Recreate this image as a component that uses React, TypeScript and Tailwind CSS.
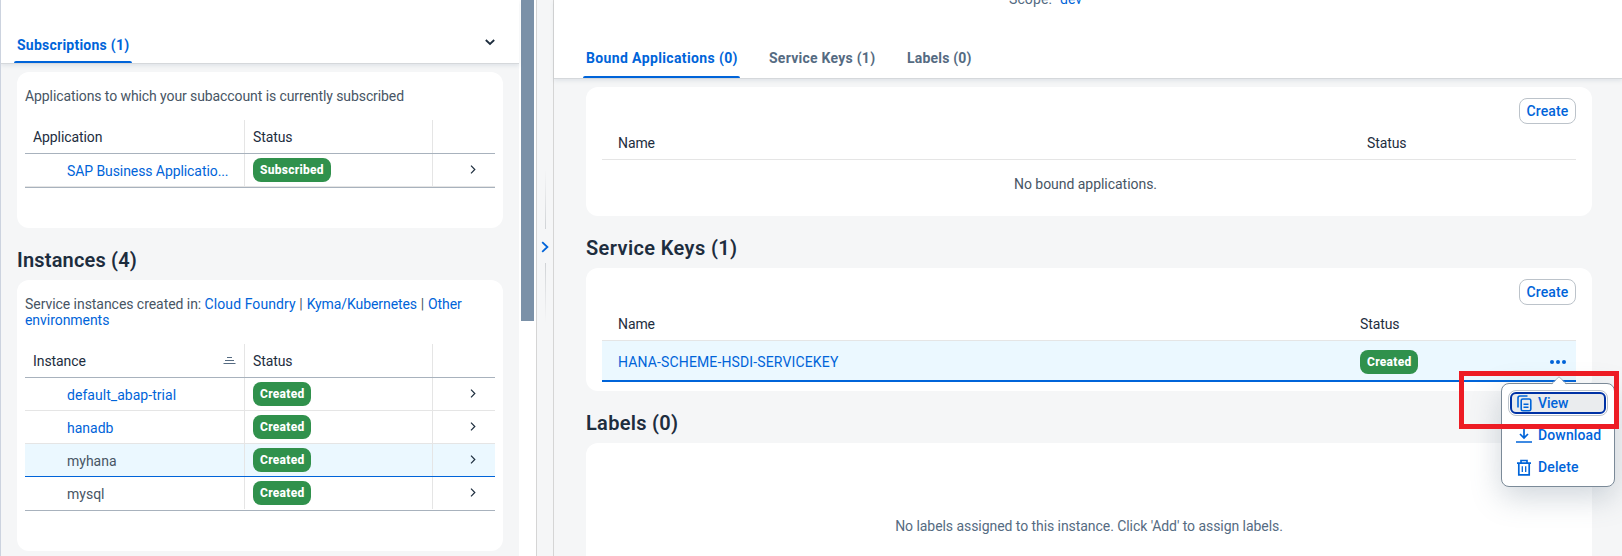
import type { ReactNode } from "react";

function Badge({ children }: { children: ReactNode }) {
  return (
    <span className="flex h-6 items-center rounded-lg bg-[#30914c] px-[7px] pb-px text-[12px] font-extrabold tracking-[0.28px] text-white">
      {children}
    </span>
  );
}

function Chevron() {
  return (
    <svg width="6" height="9" viewBox="0 0 6 9" fill="none" stroke="#1d2d3e" strokeWidth="1.2">
      <path d="M1 0.7 L4.8 4.5 L1 8.3" />
    </svg>
  );
}

function Link({ children, className = "" }: { children: ReactNode; className?: string }) {
  return <a className={`text-[#0064d9] ${className}`}>{children}</a>;
}

function TableHeader({ label, sortable }: { label: string; sortable?: boolean }) {
  return (
    <div className="flex h-[34px] border-b border-[#a8b2bd] text-[14px] font-[450] text-[#1d2d3e]">
      <div className="flex w-[220px] items-center justify-between border-r border-[#e5e5e5] pt-[2px] pr-2 pl-2 tracking-[-0.08px]">
        {label}
        {sortable && (
          <svg width="13" height="9" viewBox="0 0 13 9" stroke="#556b82" strokeWidth="1" className="mb-[3px]">
            <path d="M4 1.5H9M2 4.5H11M0.5 7.5H12.5" />
          </svg>
        )}
      </div>
      <div className="flex w-[188px] items-center border-r border-[#e5e5e5] pt-[2px] pl-2 tracking-[-0.1px]">Status</div>
      <div className="flex-1" />
    </div>
  );
}

function TableRow({
  name,
  status,
  link,
  selected,
  last,
  tracking = "",
}: {
  name: string;
  status: string;
  link?: boolean;
  selected?: boolean;
  last?: boolean;
  tracking?: string;
}) {
  return (
    <div
      className={`flex h-[33px] border-b text-[14px] ${selected ? "border-[#0064d9] bg-[#ebf8ff]" : last ? "border-white" : "border-[#e5e5e5]"}`}
    >
      <div className={`flex w-[220px] items-center border-r border-[#e5e5e5] pt-[3px] pl-[42px] ${tracking}`}>
        {link ? <Link>{name}</Link> : <span className="text-[#475564]">{name}</span>}
      </div>
      <div className="flex w-[188px] items-center border-r border-[#e5e5e5] pl-2">
        <Badge>{status}</Badge>
      </div>
      <div className="flex flex-1 items-center pb-px pl-[37px]">
        <Chevron />
      </div>
    </div>
  );
}

function LeftPane() {
  return (
    <section className="flex w-[518px] flex-col bg-[#f5f6f7]">
      <header className="relative z-10 flex h-[64px] shrink-0 items-end justify-between border-b border-[#d5d8db] bg-white pr-[24px] pl-[13px] shadow-[0_2px_4px_rgba(85,107,130,0.12)]">
        <div className="-mb-px flex h-[30px] w-[118px] flex-col justify-between">
          <span className="pl-[3px] text-[14px] leading-[22px] font-bold tracking-[0.24px] whitespace-nowrap text-[#0064d9]">
            Subscriptions (1)
          </span>
          <span className="mb-px h-[2px] rounded-t-sm bg-[#0064d9]" />
        </div>
        <svg width="10" height="7" viewBox="0 0 10 7" fill="none" stroke="#1d2d3e" strokeWidth="1.8" className="mb-[17px]">
          <path d="M0.8 1 L5 5 L9.2 1" />
        </svg>
      </header>

      <div className="mx-4 mt-2 h-[156px] shrink-0 rounded-xl bg-white px-2 pt-4">
        <p className="h-8 text-[14px] leading-4 tracking-[-0.09px] whitespace-nowrap text-[#475564]">
          Applications to which your subaccount is currently subscribed
        </p>
        <div className="border-b border-[#a8b2bd]">
          <TableHeader label="Application" />
          <TableRow name="SAP Business Applicatio..." status="Subscribed" link tracking="tracking-[-0.08px]" />
        </div>
      </div>

      <h2 className="flex h-[52px] shrink-0 items-center pt-[11px] pl-4 text-[20px] font-semibold tracking-[0.18px] text-[#1d2d3e]">
        Instances (4)
      </h2>

      <div className="mx-4 h-[271px] shrink-0 rounded-xl bg-white px-2 pt-4">
        <p className="h-12 text-[14px] leading-4 text-[#475564]">
          <span className="tracking-[-0.05px]">Service instances created in: </span>
          <Link className="tracking-[0.08px]">Cloud Foundry</Link>
          <span className="tracking-[0.2px]"> | </span>
          <Link className="tracking-[-0.08px]">Kyma/Kubernetes</Link>
          <span className="tracking-[0.2px]"> | </span>
          <Link className="tracking-[-0.05px]">Other environments</Link>
        </p>
        <div className="border-b border-[#a8b2bd]">
          <TableHeader label="Instance" sortable />
          <TableRow name="default_abap-trial" status="Created" link tracking="tracking-[0.04px]" />
          <TableRow name="hanadb" status="Created" link />
          <TableRow name="myhana" status="Created" selected />
          <TableRow name="mysql" status="Created" last />
        </div>
      </div>
    </section>
  );
}

function Splitter() {
  return (
    <div className="flex w-[18px] flex-col items-center border-x border-[#d5d5d5] bg-[#f5f6f7] pt-[169px]">
      <div className="h-[60px] w-px bg-linear-to-b from-transparent to-[#d0d3d6]" />
      <svg width="8" height="12" viewBox="0 0 8 12" fill="none" stroke="#0064d9" strokeWidth="1.8" className="mt-3 mb-[10px]">
        <path d="M1.2 1.2 L6.4 6 L1.2 10.8" />
      </svg>
      <div className="h-[60px] w-px bg-linear-to-b from-[#d0d3d6] to-transparent" />
    </div>
  );
}

function CreateButton() {
  return (
    <button className="flex h-[26px] w-[57px] items-center justify-center rounded-lg border border-[#bcc3ca] bg-white text-[14px] font-[550] tracking-[0.14px] text-[#0064d9]">
      Create
    </button>
  );
}

function SectionHeading({ children, className }: { children: ReactNode; className: string }) {
  return (
    <h2 className={`flex h-[52px] shrink-0 items-center pt-3 text-[20px] font-semibold text-[#1d2d3e] ${className}`}>
      {children}
    </h2>
  );
}

function ActionMenu() {
  return (
    <div className="absolute top-[383px] left-[1501px] h-[104px] w-[114px] rounded-lg border border-[#7b8a98] bg-white px-[6px] pt-[6px] text-[14px] font-medium text-[#0064d9] shadow-[0_10px_30px_rgba(85,107,130,0.28)]">
      <svg width="16" height="9" viewBox="0 0 16 9" className="absolute -top-[8px] left-[49px]">
        <path d="M0.5 9 L8 0.8 L15.5 9 Z" fill="#fff" />
        <path d="M0.5 7.8 L8 0.8 L15.5 7.8" fill="none" stroke="#9aa6b2" strokeWidth="0.8" />
      </svg>
      <div className="flex h-[26px] w-[100px] rounded-lg border border-[#bcc3ca] p-px">
        <div className="flex flex-1 items-center rounded-md border-2 border-[#0032a5] bg-[#eaecee] pl-[5px] tracking-[-0.05px]">
          <svg width="15" height="17" viewBox="0 0 15 17" fill="none" stroke="#0064d9" strokeWidth="1.6" className="mr-[6px]">
            <path d="M1 12.5V3Q1 1 3 1H10.5" />
            <rect x="4.2" y="4" width="9.6" height="11.8" rx="1.6" />
            <path d="M6.5 9.3H11.5M6.5 12.3H11.5" />
          </svg>
          View
        </div>
      </div>
      <div className="mt-[6px] flex h-[26px] items-center pl-[8px] tracking-[0.14px]">
        <svg width="16" height="16" viewBox="0 0 16 16" fill="none" stroke="#0064d9" strokeWidth="1.7" className="mr-[6px]">
          <path d="M8 0V10.5M4 7L8 11L12 7M0 15H16" />
        </svg>
        Download
      </div>
      <div className="mt-[6px] flex h-[26px] items-center pl-[8px] tracking-[0.12px]">
        <svg width="16" height="17" viewBox="0 0 16 17" fill="none" stroke="#0064d9" strokeWidth="1.7" className="mr-[6px]">
          <path d="M1 4.2H15M5 4V1.5H11V4M2.8 4.2V15.8H13.2V4.2" />
          <path d="M6.3 7.2V13M9.7 7.2V13" strokeWidth="1.3" />
        </svg>
        Delete
      </div>
    </div>
  );
}

function RightPane() {
  return (
    <section className="flex flex-1 flex-col bg-[#f5f6f7]">
      <header className="relative z-10 flex h-[79px] shrink-0 flex-col justify-between border-b border-[#d5d8db] bg-white shadow-[0_2px_4px_rgba(85,107,130,0.12)]">
        <div className="-mt-[10px] flex gap-2 pl-[455px] text-[14px] leading-[18px]">
          <span className="tracking-[0.1px] text-[#556b82]">Scope:</span>
          <Link className="tracking-[0.1px]">dev</Link>
        </div>
        <nav className="flex h-[30px] pl-[29px] text-[14px] leading-[21px] font-bold whitespace-nowrap text-[#556b82]">
          <div className="flex w-[157px] flex-col justify-between text-[#0064d9]">
            <span className="pl-[3px] tracking-[0.37px]">Bound Applications (0)</span>
            <span className="h-[2px] rounded-t-sm bg-[#0064d9]" />
          </div>
          <span className="ml-[29px] w-[138px] tracking-[0.25px]">Service Keys (1)</span>
          <span className="tracking-[0.2px]">Labels (0)</span>
        </nav>
      </header>

      <div className="mr-[30px] ml-[32px] mt-2 flex h-[129px] shrink-0 flex-col rounded-xl bg-white px-4 pt-[11px]">
        <div className="flex justify-end">
          <CreateButton />
        </div>
        <div className="flex h-[36px] items-center border-b border-[#e5e5e5] pt-[3px] pl-4 text-[14px] font-[450] tracking-[-0.1px] text-[#1d2d3e]">
          <span className="w-[749px]">Name</span>
          <span>Status</span>
        </div>
        <div className="flex h-[49px] items-center justify-center pr-[7px] text-[14px] tracking-[-0.04px] text-[#475564]">
          No bound applications.
        </div>
      </div>

      <SectionHeading className="pl-[32px] tracking-[0.38px]">Service Keys (1)</SectionHeading>

      <div className="mr-[30px] ml-[32px] flex h-[123px] shrink-0 flex-col rounded-xl bg-white px-4 pt-[11px]">
        <div className="flex justify-end">
          <CreateButton />
        </div>
        <div className="flex h-[36px] items-center border-b border-[#e5e5e5] pt-[3px] pl-4 text-[14px] font-[450] tracking-[-0.1px] text-[#1d2d3e]">
          <span className="w-[742px]">Name</span>
          <span>Status</span>
        </div>
        <div className="flex h-[41px] items-center border-b-2 border-[#0064d9] bg-[#ebf8ff] pt-[3px] pl-4 text-[14px]">
          <Link className="w-[742px] tracking-[0.14px]">HANA-SCHEME-HSDI-SERVICEKEY</Link>
          <Badge>Created</Badge>
          <svg width="16" height="4" viewBox="0 0 16 4" fill="#0064d9" className="mr-[10px] ml-auto">
            <circle cx="2" cy="2" r="2" />
            <circle cx="8" cy="2" r="2" />
            <circle cx="14" cy="2" r="2" />
          </svg>
        </div>
      </div>

      <SectionHeading className="pl-[32px] tracking-[0.3px]">Labels (0)</SectionHeading>

      <div className="mr-[30px] ml-[32px] flex h-[160px] shrink-0 items-center justify-center rounded-t-xl bg-white pt-[7px] text-[14px] tracking-[-0.06px] text-[#556b82]">
        No labels assigned to this instance. Click 'Add' to assign labels.
      </div>
    </section>
  );
}

export default function App() {
  return (
    <main className="relative flex h-[556px] w-[1622px] overflow-hidden border-l border-[#ccd3df] bg-white font-['Roboto',sans-serif]">
      <LeftPane />
      <div className="w-[17px] bg-white pl-[2px]">
        <div className="h-[321px] w-[13px] bg-[#7b91a8]" />
      </div>
      <Splitter />
      <RightPane />
      <div className="absolute inset-0 z-20 -left-px">
        <ActionMenu />
        <div className="absolute top-[371px] left-[1459px] h-[58px] w-[160px] border-[5px] border-[#ed1c24]" />
      </div>
    </main>
  );
}
